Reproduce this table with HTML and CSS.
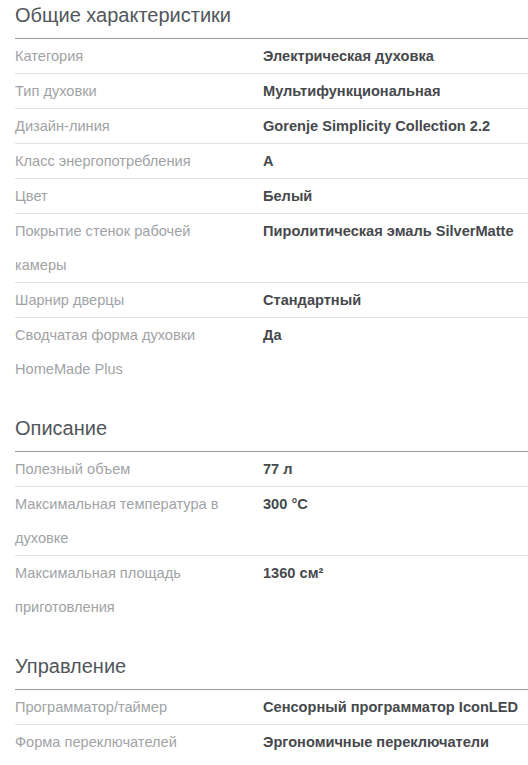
FILE: index.html
```html
<!DOCTYPE html>
<html lang="ru">
<head>
<meta charset="utf-8">
<link rel="stylesheet" href="styles.css">
</head>
<body>
<div class="specs">
  <section class="group">
    <h2 class="group-title">Общие характеристики</h2>
    <div class="row"><div class="label">Категория</div><div class="value">Электрическая духовка</div></div>
    <div class="row"><div class="label">Тип духовки</div><div class="value">Мультифункциональная</div></div>
    <div class="row"><div class="label">Дизайн-линия</div><div class="value">Gorenje Simplicity Collection 2.2</div></div>
    <div class="row"><div class="label">Класс энергопотребления</div><div class="value">A</div></div>
    <div class="row"><div class="label">Цвет</div><div class="value">Белый</div></div>
    <div class="row"><div class="label">Покрытие стенок рабочей камеры</div><div class="value">Пиролитическая эмаль SilverMatte</div></div>
    <div class="row"><div class="label">Шарнир дверцы</div><div class="value">Стандартный</div></div>
    <div class="row"><div class="label">Сводчатая форма духовки HomeMade Plus</div><div class="value">Да</div></div>
  </section>
  <section class="group">
    <h2 class="group-title">Описание</h2>
    <div class="row"><div class="label">Полезный объем</div><div class="value">77 л</div></div>
    <div class="row"><div class="label">Максимальная температура в духовке</div><div class="value">300 °C</div></div>
    <div class="row"><div class="label">Максимальная площадь приготовления</div><div class="value">1360 см²</div></div>
  </section>
  <section class="group">
    <h2 class="group-title">Управление</h2>
    <div class="row"><div class="label">Программатор/таймер</div><div class="value">Сенсорный программатор IconLED</div></div>
    <div class="row"><div class="label">Форма переключателей</div><div class="value">Эргономичные переключатели</div></div>
  </section>
</div>
</body>
</html>
```
FILE: styles.css
```css
html, body {
  margin: 0;
  padding: 0;
  background: #fff;
}
body {
  font-family: "Liberation Sans", Arial, sans-serif;
  overflow: hidden;
}
.specs {
  padding-left: 15px;
  width: 530px;
}
.group + .group {
  margin-top: 27px;
}
.group-title {
  margin: 0;
  height: 38px;
  font-size: 20px;
  font-weight: normal;
  line-height: 30px;
  color: #51565b;
  border-bottom: 1px solid #999c9f;
}
.row {
  display: grid;
  grid-template-columns: 248px 1fr;
  font-size: 14.6px;
  line-height: 34px;
  border-bottom: 1px solid #dfe1e3;
}
.row:last-child {
  border-bottom: none;
}
.label {
  color: #a0a3a6;
  padding-right: 20px;
}
.value {
  color: #46494c;
  font-weight: bold;
}
```
